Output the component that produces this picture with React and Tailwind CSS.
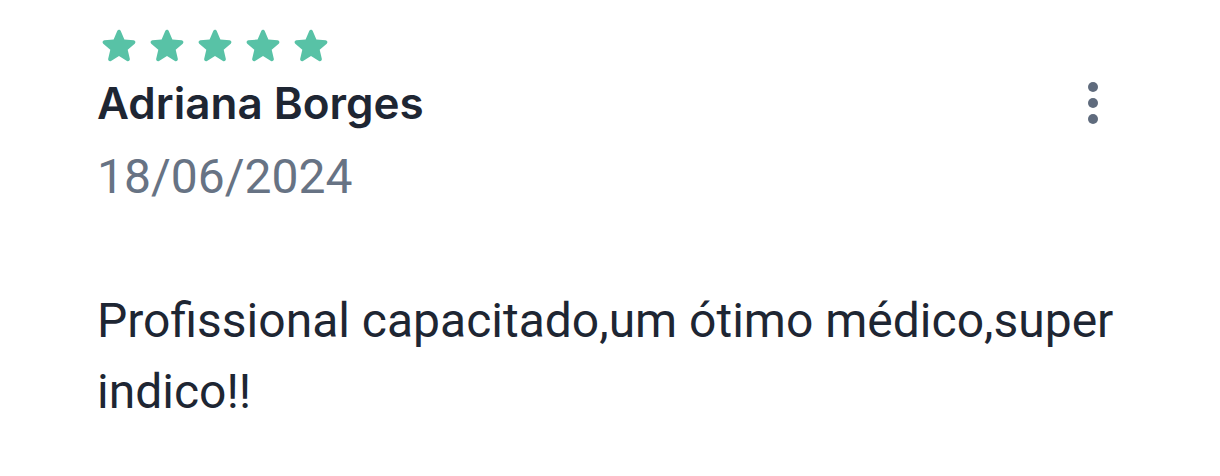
const STAR =
  'M12 17.27l4.15 2.51c.76.46 1.69-.22 1.49-1.08l-1.1-4.72 3.67-3.18c.67-.58.31-1.68-.57-1.75l-4.83-.41-1.89-4.46c-.34-.81-1.5-.81-1.84 0L9.19 8.63l-4.83.41c-.88.07-1.24 1.17-.57 1.75l3.67 3.18-1.1 4.72c-.2.86.73 1.54 1.49 1.08l4.15-2.5z';

function Stars({ count = 5 }) {
  return (
    <div className="flex gap-[2px] -ml-[1px]">
      {Array.from({ length: count }).map((_, i) => (
        <svg key={i} viewBox="0 0 24 24" className="w-[46px] h-[46px]" fill="#58c2a6">
          <path d={STAR} />
        </svg>
      ))}
    </div>
  );
}

export default function App() {
  return (
    <div
      className="w-[1220px] h-[476px] bg-white pl-[97px] pr-[60px] pt-[23px]"
      style={{ fontFamily: 'Roboto, "Noto Sans", sans-serif' }}
    >
      <Stars />
      <div className="flex items-start justify-between pr-[62px] mt-[8px]">
        <div>
          <p
            className="text-[44px] leading-[52px] font-semibold text-[#1e2633]"
            style={{ fontFamily: 'Inter, Roboto, sans-serif' }}
          >
            Adriana Borges
          </p>
          <p className="text-[48px] leading-[56px] text-[#677384] mt-[20px]">18/06/2024</p>
        </div>
        <button className="flex flex-col gap-[6px] mt-[5px]">
          <span className="w-[10px] h-[10px] rounded-full bg-[#5f6b7d]" />
          <span className="w-[10px] h-[10px] rounded-full bg-[#5f6b7d]" />
          <span className="w-[10px] h-[10px] rounded-full bg-[#5f6b7d]" />
        </button>
      </div>
      <p className="mt-[80px] text-[48px] leading-[71px] text-[#1e2633]">
        Profissional capacitado,um ótimo médico,super indico!!
      </p>
    </div>
  );
}
